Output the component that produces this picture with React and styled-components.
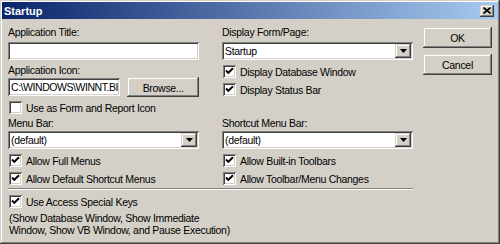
import React from 'react'
import styled, { createGlobalStyle } from 'styled-components'

const GlobalStyle = createGlobalStyle`
  html, body { margin: 0; padding: 0; background: #d4d0c8; }
  body {
    font-family: "Liberation Sans", Arial, sans-serif;
    font-size: 10.5px;
    letter-spacing: -0.3px;
  }
`

const raised = `
  box-shadow: inset -1px -1px #404040, inset 1px 1px #d4d0c8,
    inset -2px -2px #808080, inset 2px 2px #ffffff;
`
const sunken = `
  box-shadow: inset 1px 1px #808080, inset -1px -1px #ffffff,
    inset 2px 2px #404040, inset -2px -2px #d4d0c8;
`

const Window = styled.div`
  width: 500px;
  height: 244px;
  box-sizing: border-box;
  padding: 2px;
  background: #d4d0c8;
  ${raised}
  display: flex;
  flex-direction: column;
`

const TitleBar = styled.div`
  height: 17px;
  display: flex;
  align-items: center;
  padding: 0 4px 0 2px;
  background: linear-gradient(to right, #0a246a, #a6caf0);
  color: #fff;
  font-weight: bold;
  font-size: 11px;
  letter-spacing: 0;
`

const TitleText = styled.span`
  flex: 1;
`

const CloseBox = styled.div`
  width: 14px;
  height: 12px;
  background: #d4d0c8;
  ${raised}
  display: flex;
  align-items: center;
  justify-content: center;
`

const Body = styled.div`
  display: flex;
  padding: 7px 6px 0 6px;
`

const Main = styled.div`
  width: 405px;
  display: flex;
  flex-direction: column;
`

const Side = styled.div`
  margin-left: 10px;
  padding-top: 1px;
  display: flex;
  flex-direction: column;
  gap: 6px;
`

const Columns = styled.div`
  display: grid;
  grid-template-columns: 191px 191px;
  column-gap: 23px;
  margin-top: ${p => p.$mt || 0}px;
`

const Col = styled.div`
  display: flex;
  flex-direction: column;
`

const Label = styled.div`
  height: 13px;
  line-height: 13px;
  margin-top: ${p => p.$mt || 0}px;
  white-space: nowrap;
`

const Field = styled.div`
  box-sizing: border-box;
  height: 18px;
  width: ${p => (p.$w ? `${p.$w}px` : '100%')};
  margin-top: ${p => p.$mt || 0}px;
  background: #fff;
  ${sunken}
  display: flex;
  align-items: center;
  padding: 2px 2px 2px 3px;
  overflow: hidden;
  white-space: nowrap;
`

const FieldText = styled.span`
  flex: 1;
  letter-spacing: ${p => (p.$tight ? '-0.45px' : 'inherit')};
`

const ArrowButton = styled.div`
  width: 16px;
  height: 14px;
  flex: none;
  background: #d4d0c8;
  ${raised}
  display: flex;
  align-items: center;
  justify-content: center;
`

const IconRow = styled.div`
  display: flex;
  align-items: center;
  height: 20px;
  gap: 7px;
`

const Button = styled.div`
  box-sizing: border-box;
  width: ${p => p.$w || 69}px;
  height: ${p => p.$h || 21}px;
  background: #d4d0c8;
  ${raised}
  display: flex;
  align-items: center;
  justify-content: center;
  padding-top: 1px;
`

const CheckRow = styled.div`
  display: flex;
  align-items: center;
  height: 13px;
  gap: 4px;
  margin-top: ${p => p.$mt || 0}px;
  padding-left: 1px;
  white-space: nowrap;
`

const Box = styled.div`
  width: 13px;
  height: 13px;
  box-sizing: border-box;
  background: #fff;
  ${sunken}
  display: flex;
  align-items: center;
  justify-content: center;
  flex: none;
`

const Separator = styled.div`
  margin-top: ${p => p.$mt || 0}px;
  border-top: 1px solid #808080;
  border-bottom: 1px solid #ffffff;
`

const Note = styled.div`
  margin-top: 4px;
  line-height: 12px;
  padding-left: 1px;
`

const Check = ({ checked, children, mt }) => (
  <CheckRow $mt={mt}>
    <Box>
      {checked && (
        <svg width="9" height="9" viewBox="0 0 9 9">
          <path d="M1 3.5 L3.3 5.8 L8 1.2" stroke="#000" strokeWidth="1.9" fill="none" />
        </svg>
      )}
    </Box>
    <span>{children}</span>
  </CheckRow>
)

const Combo = ({ value, mt }) => (
  <Field $mt={mt}>
    <FieldText>{value}</FieldText>
    <ArrowButton>
      <svg width="7" height="4" viewBox="0 0 7 4">
        <path d="M0 0 H7 L3.5 4 Z" fill="#000" />
      </svg>
    </ArrowButton>
  </Field>
)

export default function App() {
  return (
    <>
      <GlobalStyle />
      <Window>
        <TitleBar>
          <TitleText>Startup</TitleText>
          <CloseBox>
            <svg width="8" height="7" viewBox="0 0 8 7">
              <path d="M0.5 0.5 L7.5 6.5 M7.5 0.5 L0.5 6.5" stroke="#000" strokeWidth="1.6" />
            </svg>
          </CloseBox>
        </TitleBar>
        <Body>
          <Main>
            <Columns>
              <Col>
                <Label>Application Title:</Label>
                <Field $mt={3} />
                <Label $mt={4}>Application Icon:</Label>
                <IconRow>
                  <Field $w={113}>
                    <FieldText $tight>C:\WINDOWS\WINNT.BI</FieldText>
                  </Field>
                  <Button $w={72} $h={20}>Browse...</Button>
                </IconRow>
                <Check mt={4}>Use as Form and Report Icon</Check>
              </Col>
              <Col>
                <Label>Display Form/Page:</Label>
                <Combo mt={3} value="Startup" />
                <Check checked mt={5}>Display Database Window</Check>
                <Check checked mt={5}>Display Status Bar</Check>
              </Col>
            </Columns>
            <Columns $mt={3}>
              <Col>
                <Label>Menu Bar:</Label>
                <Combo mt={1} value="(default)" />
                <Check checked mt={5}>Allow Full Menus</Check>
                <Check checked mt={5}>Allow Default Shortcut Menus</Check>
              </Col>
              <Col>
                <Label>Shortcut Menu Bar:</Label>
                <Combo mt={1} value="(default)" />
                <Check checked mt={5}>Allow Built-in Toolbars</Check>
                <Check checked mt={5}>Allow Toolbar/Menu Changes</Check>
              </Col>
            </Columns>
            <Separator $mt={3} />
            <Check checked mt={5}>Use Access Special Keys</Check>
            <Note>
              (Show Database Window, Show Immediate
              <br />
              Window, Show VB Window, and Pause Execution)
            </Note>
          </Main>
          <Side>
            <Button>OK</Button>
            <Button>Cancel</Button>
          </Side>
        </Body>
      </Window>
    </>
  )
}
